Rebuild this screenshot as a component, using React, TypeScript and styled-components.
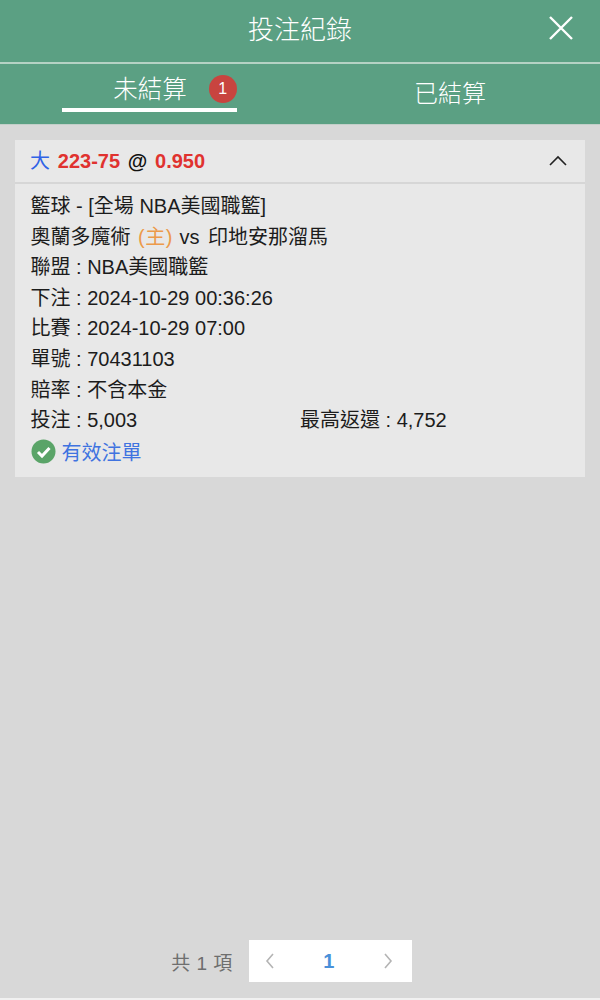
import React from "react";
import styled, { createGlobalStyle } from "styled-components";

const Global = createGlobalStyle`
  html, body { margin: 0; padding: 0; background: #d8d8d8; }
  body { font-family: "Liberation Sans", "Noto Sans CJK TC", sans-serif; }
  * { box-sizing: border-box; }
`;

const Page = styled.div`
  width: 600px;
  height: 1000px;
  display: flex;
  flex-direction: column;
  background: #d8d8d8;
  overflow: hidden;
`;

const TitleBar = styled.header`
  height: 62px;
  flex: none;
  display: flex;
  align-items: center;
  justify-content: center;
  position: relative;
  background: #5ba083;
  color: #fff;
  font-size: 26px;
  font-weight: 300;
  padding-bottom: 8px;
`;

const CloseButton = styled.button`
  position: absolute;
  right: 26px;
  top: 15px;
  width: 26px;
  height: 26px;
  padding: 0;
  border: 0;
  background: none;
  svg { display: block; }
`;

const Tabs = styled.nav`
  height: 63px;
  flex: none;
  display: flex;
  background: #5ba083;
  border-top: 2px solid #b5d2c4;
  border-bottom: 1px solid #c3cfc9;
`;

const Tab = styled.div<{ $active?: boolean }>`
  width: 300px;
  color: #fff;
  font-size: ${(p) => (p.$active ? "24.5px" : "24px")};
  font-weight: 300;
  display: flex;
  justify-content: center;
  padding-top: ${(p) => (p.$active ? "6px" : "10px")};
`;

const ActiveLabel = styled.div`
  width: 175px;
  height: 42px;
  margin-left: -1px;
  display: flex;
  align-items: flex-start;
  justify-content: center;
  gap: 22px;
  padding-left: 51px;
  border-bottom: 4px solid #fff;
`;

const Badge = styled.span`
  width: 28px;
  height: 28px;
  margin-top: 5px;
  flex: none;
  border-radius: 50%;
  background: #c8443f;
  color: #fff;
  font-size: 16px;
  display: flex;
  align-items: center;
  justify-content: center;
`;

const Content = styled.main`
  flex: 1;
  display: flex;
  flex-direction: column;
  padding: 15px 15px 16px;
`;

const Card = styled.section`
  background: #e8e8e8;
`;

const CardHead = styled.div`
  height: 44px;
  display: flex;
  align-items: center;
  justify-content: space-between;
  padding: 0 18px 0 15px;
  border-bottom: 2px solid #d6d6d6;
`;

const HeadText = styled.span`
  padding-bottom: 4px;
  font-size: 20px;
  font-weight: 700;
  word-spacing: 2.2px;
  color: #111;
`;

const Pick = styled.span`
  color: #2f62e6;
  font-weight: 400;
`;

const Odds = styled.span`
  color: #e0322f;
`;

const CardBody = styled.div`
  padding: 7px 15px 9px 15.5px;
  font-size: 20px;
  color: #1c1c1c;
`;

const Line = styled.div`
  height: 30.6px;
  line-height: 30.6px;
  white-space: nowrap;
`;

const Home = styled.span`
  color: #ec9a4a;
  margin: 0 1px 0 2px;
  letter-spacing: 0.5px;
`;

const Versus = styled.span`
  margin-right: 3px;
`;

const SplitLine = styled(Line)`
  display: grid;
  grid-template-columns: 269.5px 1fr;
`;

const Status = styled.div`
  height: 32px;
  display: flex;
  align-items: center;
  gap: 6px;
  color: #3f73e0;
  svg { display: block; }
`;

const Pager = styled.footer`
  margin-top: auto;
  display: flex;
  align-items: center;
  justify-content: center;
  gap: 16px;
  padding-right: 17px;
  color: #6e6e6e;
  font-size: 19px;
`;

const Total = styled.span`
  letter-spacing: 0.5px;
`;

const PageBox = styled.div`
  width: 163px;
  height: 42px;
  background: #fff;
  display: flex;
  align-items: center;
  justify-content: space-between;
  padding: 0 18px 0 15px;
  svg { display: block; }
`;

const CurrentPage = styled.span`
  color: #4a90d9;
  font-size: 20px;
  font-weight: 700;
`;

const BottomEdge = styled.div`
  height: 2px;
  flex: none;
  background: #f1f1f1;
`;

const Chevron = ({ d }: { d: string }) => (
  <svg width="12" height="18" viewBox="0 0 12 18" fill="none" stroke="#b4b4b4" strokeWidth="1.6">
    <path d={d} />
  </svg>
);

export default function App() {
  return (
    <Page>
      <Global />
      <TitleBar>
        投注紀錄
        <CloseButton aria-label="close">
          <svg width="26" height="26" viewBox="0 0 26 26" fill="none" stroke="#fff" strokeWidth="2.4">
            <path d="M2 2L24 24M24 2L2 24" />
          </svg>
        </CloseButton>
      </TitleBar>
      <Tabs>
        <Tab $active>
          <ActiveLabel>
            未結算
            <Badge>1</Badge>
          </ActiveLabel>
        </Tab>
        <Tab>已結算</Tab>
      </Tabs>
      <Content>
        <Card>
          <CardHead>
            <HeadText>
              <Pick>大</Pick> <Odds>223-75</Odds> @ <Odds>0.950</Odds>
            </HeadText>
            <svg width="18" height="12" viewBox="0 0 18 12" fill="none" stroke="#222" strokeWidth="1.6">
              <path d="M1 10L9 2L17 10" />
            </svg>
          </CardHead>
          <CardBody>
            <Line>籃球 - [全場 NBA美國職籃]</Line>
            <Line>
              奧蘭多魔術 <Home>(主)</Home> <Versus>vs</Versus> 印地安那溜馬
            </Line>
            <Line>聯盟 : NBA美國職籃</Line>
            <Line>下注 : 2024-10-29 00:36:26</Line>
            <Line>比賽 : 2024-10-29 07:00</Line>
            <Line>單號 : 70431103</Line>
            <Line>賠率 : 不含本金</Line>
            <SplitLine>
              <span>投注 : 5,003</span>
              <span>最高返還 : 4,752</span>
            </SplitLine>
            <Status>
              <svg width="25" height="25" viewBox="0 0 25 25">
                <circle cx="12.5" cy="12.5" r="12" fill="#5aa468" />
                <path d="M7 13L11 17L18.5 9" fill="none" stroke="#fff" strokeWidth="3" />
              </svg>
              有效注單
            </Status>
          </CardBody>
        </Card>
        <Pager>
          <Total>共 1 項</Total>
          <PageBox>
            <Chevron d="M9 2L3 9L9 16" />
            <CurrentPage>1</CurrentPage>
            <Chevron d="M3 2L9 9L3 16" />
          </PageBox>
        </Pager>
      </Content>
      <BottomEdge />
    </Page>
  );
}
